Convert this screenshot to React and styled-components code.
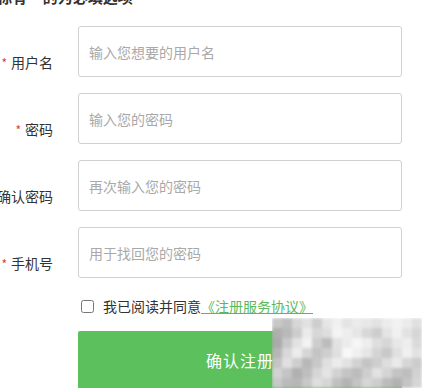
import styled, { createGlobalStyle } from 'styled-components';

const Global = createGlobalStyle`
  html, body { margin: 0; padding: 0; background: #fff; }
  body { font-family: "Microsoft YaHei", "Noto Sans CJK SC", sans-serif; overflow: hidden; }
`;

const Page = styled.div`
  position: relative;
  width: 422px;
  height: 388px;
  overflow: hidden;
`;

const Heading = styled.h3`
  margin: -13px 0 19px -3px;
  font-size: 15px;
  line-height: 20px;
  font-weight: bold;
  color: #333;
  span { color: #e4393c; margin: 0 4px; }
`;

const Form = styled.form`
  display: flex;
  flex-direction: column;
  gap: 16px;
  margin-left: -5px;
`;

const Row = styled.div`
  display: flex;
  align-items: flex-start;
`;

const Label = styled.label`
  width: 58px;
  padding-top: 26px;
  margin-right: 25px;
  text-align: right;
  font-size: 14px;
  line-height: 20px;
  color: #333;
  white-space: nowrap;
`;

const Star = styled.i`
  font-style: normal;
  color: #e4393c;
  font-size: 12px;
  margin-right: 4px;
`;

const Input = styled.input`
  box-sizing: border-box;
  width: 324px;
  height: 51px;
  border: 1px solid #d0d0d0;
  border-radius: 3px;
  padding: 0 10px;
  font-size: 14px;
  font-family: inherit;
  color: #333;
  outline: none;
  &::placeholder { color: #a9a9a9; }
`;

const Agree = styled.div`
  display: flex;
  align-items: center;
  margin: 2px 0 0 86px;
  font-size: 14px;
  line-height: 20px;
  color: #333;
  input { width: 13px; height: 13px; margin: 0 9px 0 0; }
  a { color: #5cb85c; text-decoration: underline; }
`;

const Submit = styled.button`
  box-sizing: border-box;
  width: 324px;
  height: 58px;
  margin: -1px 0 0 83px;
  border: none;
  border-radius: 2px;
  background: #5cc15c;
  color: #fff;
  font-size: 16px;
  font-family: inherit;
  letter-spacing: 1px;
`;

const MosaicClip = styled.div`
  position: absolute;
  left: 272px;
  top: 318px;
  width: 150px;
  height: 70px;
  overflow: hidden;
`;

const Mosaic = styled.div`
  display: grid;
  grid-template-columns: repeat(15, 10px);
  grid-auto-rows: 10px;
  filter: blur(1.5px);
  margin: 0 -2px 0 0;
`;

const Cell = styled.div`
  background: ${p => p.$c};
`;

const shades = [
  200, 190, 215, 225, 205, 230, 240, 228, 235, 232, 226, 236, 242, 236, 224,
  175, 185, 205, 235, 215, 222, 244, 238, 230, 215, 205, 228, 240, 226, 214,
  170, 200, 226, 242, 205, 188, 226, 236, 246, 238, 222, 214, 232, 238, 218,
  182, 216, 236, 214, 196, 206, 224, 248, 240, 230, 212, 200, 224, 240, 226,
  196, 224, 206, 184, 200, 224, 236, 226, 210, 196, 206, 222, 234, 214, 204,
  210, 196, 176, 190, 214, 228, 210, 196, 188, 206, 226, 212, 196, 190, 210,
  200, 186, 182, 200, 222, 214, 192, 180, 196, 214, 206, 188, 178, 196, 214,
];

export default function App() {
  return (
    <Page>
      <Global />
      <Heading>标有<span>*</span>的为必填选项</Heading>
      <Form>
        <Row>
          <Label><Star>*</Star>用户名</Label>
          <Input placeholder="输入您想要的用户名" />
        </Row>
        <Row>
          <Label><Star>*</Star>密码</Label>
          <Input type="password" placeholder="输入您的密码" />
        </Row>
        <Row>
          <Label>确认密码</Label>
          <Input type="password" placeholder="再次输入您的密码" />
        </Row>
        <Row>
          <Label><Star>*</Star>手机号</Label>
          <Input placeholder="用于找回您的密码" />
        </Row>
        <Agree>
          <input type="checkbox" />
          我已阅读并同意<a href="#">《注册服务协议》</a>
        </Agree>
        <Submit type="button">确认注册</Submit>
      </Form>
      <MosaicClip>
        <Mosaic>
          {shades.map((s, i) => (
            <Cell key={i} $c={`rgb(${s},${s},${s})`} />
          ))}
        </Mosaic>
      </MosaicClip>
    </Page>
  );
}
